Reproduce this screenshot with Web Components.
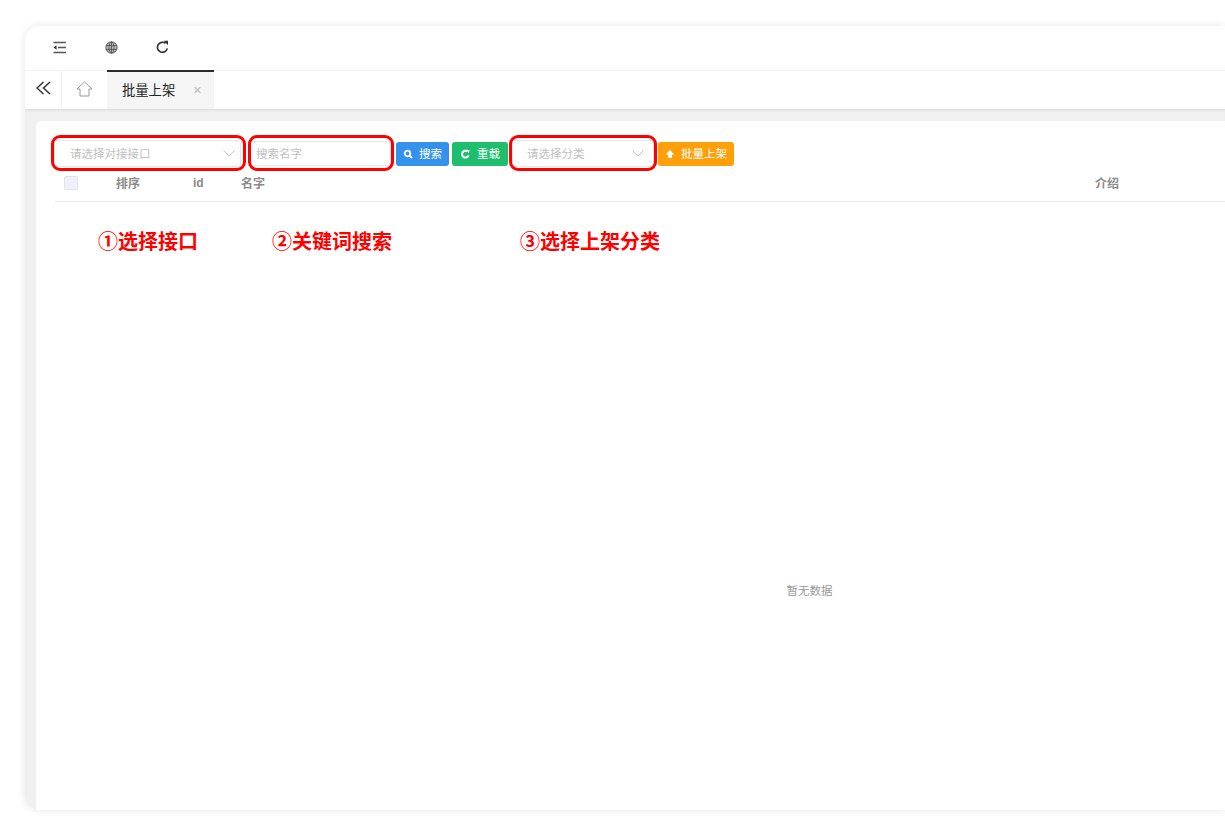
<!DOCTYPE html>
<html lang="zh">
<head>
<meta charset="utf-8">
<title>批量上架</title>
<style>
  html, body { margin: 0; height: 100%; background: #fff; overflow: hidden; }
  body { font-family: "Noto Sans CJK SC", "Liberation Sans", sans-serif; }
</style>
</head>
<body>
<admin-shell>
  <top-bar slot="top"></top-bar>
  <tab-strip slot="tabs"></tab-strip>
  <bulk-panel></bulk-panel>
</admin-shell>

<!-- annotations drawn over the screenshot -->
<red-ring x="51" y="135" w="195" h="36"></red-ring>
<red-ring x="248" y="135" w="146" h="36"></red-ring>
<red-ring x="509" y="135" w="148" h="36"></red-ring>
<red-note x="98" y="229">①选择接口</red-note>
<red-note x="272" y="229">②关键词搜索</red-note>
<red-note x="520" y="229">③选择上架分类</red-note>

<script>
class AdminShell extends HTMLElement {
  constructor() {
    super();
    this.attachShadow({ mode: 'open' });
    this.shadowRoot.innerHTML = `
      <style>
        :host {
          display: flex;
          flex-direction: column;
          width: 1200px;
          height: 784px;
          margin: 26px 0 0 25px;
          background: #fff;
          border-radius: 14px 0 0 14px;
          box-shadow: 0 0 8px rgba(0, 0, 0, .1);
          overflow: hidden;
        }
        main {
          flex: 1;
          min-height: 0;
          display: flex;
          background: #f0f0f0;
          padding: 12px 0 0 11px;
          box-shadow: inset 0 3px 3px -2px rgba(0, 0, 0, .1);
        }
      </style>
      <slot name="top"></slot>
      <slot name="tabs"></slot>
      <main><slot></slot></main>
    `;
  }
}

class TopBar extends HTMLElement {
  constructor() {
    super();
    this.attachShadow({ mode: 'open' });
    this.shadowRoot.innerHTML = `
      <style>
        :host {
          display: flex;
          align-items: center;
          height: 42px;
          padding: 0 0 2px 27px;
          border-bottom: 1px solid #f2f2f2;
          gap: 37px;
        }
        svg { display: block; width: 15px; height: 15px; fill: none; stroke: #333; }
      </style>
      <svg viewBox="0 0 15 15" stroke-width="1.300">
        <path d="M1.500 2.500h12.500M6 7.500h8M1.500 12.500h12.500" stroke="#555"/>
        <path d="M4.500 5.300L1.500 7.500 4.500 9.700z" fill="#333" stroke="none"/>
      </svg>
      <svg viewBox="0 0 15 15" stroke-width=".9">
        <circle cx="7.500" cy="7.500" r="5.600" fill="#bbb" stroke="#444"/>
        <ellipse cx="7.500" cy="7.500" rx="2.500" ry="5.600" stroke="#555"/>
        <path d="M2 5.600h11M2 9.400h11M7.500 2v11" stroke="#555"/>
      </svg>
      <svg viewBox="0 0 15 15" stroke-width="1.600" style="margin-left:-1px">
        <path d="M12.300 8.400A5 5 0 1 1 10.600 3.400"/>
        <path d="M8.800 .8h4.200v4.400z" fill="#333" stroke="none"/>
      </svg>
    `;
  }
}

class TabStrip extends HTMLElement {
  constructor() {
    super();
    this.attachShadow({ mode: 'open' });
    this.shadowRoot.innerHTML = `
      <style>
        :host {
          display: flex;
          height: 38px;
          position: relative;
          z-index: 1;
          font-size: 13.300px;
          color: #222;
        }
        .cell {
          display: flex;
          align-items: center;
          justify-content: center;
          box-sizing: border-box;
          border-right: 1px solid #f4f4f4;
        }
        .fold { width: 37px; padding-bottom: 3px; }
        .home { width: 45px; border-right: 0; padding-bottom: 2px; }
        .tab {
          box-sizing: border-box;
          width: 107px;
          background: #f5f5f5;
          border-top: 2px solid #2b2b2b;
          margin-top: -1px;
          height: 39px;
          display: flex;
          align-items: center;
          padding: 0 0 2px 15px;
        }
        .tab b { flex: none; font-weight: 400; width: 54px; line-height: 1; white-space: nowrap; }
        .tab span { margin-left: 17px; color: #bbb; font: 15px "Liberation Sans", sans-serif; }
        svg { display: block; fill: none; }
      </style>
      <div class="cell fold">
        <svg width="15" height="15" viewBox="0 0 15 15" stroke="#333" stroke-width="1.500">
          <path d="M7.500 1L1 7l6.500 6M14 1L7.500 7l6.500 6"/>
        </svg>
      </div>
      <div class="cell home">
        <svg width="17" height="16" viewBox="0 0 17 16" stroke="#999" stroke-width="1">
          <path d="M1 8L8.500 1 16 8h-3v7H4V8z"/>
        </svg>
      </div>
      <div class="tab"><b>批量上架</b><span>×</span></div>
    `;
  }
}

class PickBox extends HTMLElement {
  constructor() {
    super();
    this.attachShadow({ mode: 'open' });
    this.shadowRoot.innerHTML = `
      <style>
        :host {
          display: flex;
          align-items: center;
          box-sizing: border-box;
          width: ${this.getAttribute('width')}px;
          height: 27px;
          padding: 0 ${this.getAttribute('pr')}px 0 ${this.getAttribute('pl')}px;
          background: #fff;
          border: 1px solid #e6e6e6;
          border-radius: 3px;
          color: #c0c0c0;
          font-size: 11.500px;
        }
        span { flex: 1; padding-bottom: 2px; }
        svg { display: block; }
      </style>
      <span>${this.getAttribute('label')}</span>
      <svg width="12" height="7" viewBox="0 0 12 7" fill="none" stroke="#c4c4c4" stroke-width="1"><path d="M.5.5L6 6 11.500 .5"/></svg>
    `;
  }
}

class SearchField extends HTMLElement {
  constructor() {
    super();
    this.attachShadow({ mode: 'open' });
    this.shadowRoot.innerHTML = `
      <style>
        :host {
          display: flex;
          align-items: center;
          box-sizing: border-box;
          width: 141px;
          height: 25px;
          padding: 0 0 1px 5px;
          border: 1px solid #e6e6e6;
          border-radius: 3px;
          color: #c0c0c0;
          font-size: 11.500px;
        }
      </style>
      <span>搜索名字</span>
    `;
  }
}

const glyphs = {
  search: '<circle cx="4.500" cy="4.500" r="2.800" fill="none" stroke="#fff" stroke-width="1.800"/><path d="M6.500 6.500L9 9" stroke="#fff" stroke-width="2"/>',
  reload: '<path d="M8.600 6.300A3.400 3.400 0 1 1 7.400 2.400" fill="none" stroke="#fff" stroke-width="2"/><path d="M6.300 .6L9.600 1.200 8.600 4.500z" fill="#fff"/>',
  up: '<path d="M5 1L9.300 5.400H6.900V9H3.100V5.400H.7z" fill="#fff"/>'
};

class ActionBtn extends HTMLElement {
  constructor() {
    super();
    this.attachShadow({ mode: 'open' });
    this.shadowRoot.innerHTML = `
      <style>
        :host {
          display: flex;
          align-items: center;
          box-sizing: border-box;
          height: 24px;
          width: ${this.getAttribute('width')}px;
          padding-left: ${this.getAttribute('pl') || 7}px;
          gap: ${this.getAttribute('gap') || 6}px;
          border-radius: 3px;
          background: ${this.getAttribute('color')};
          color: #fff;
          font-size: 11.500px;
        }
        svg { display: block; flex: none; }
        span { padding-bottom: 1px; }
      </style>
      <svg width="10" height="10" viewBox="0 0 10 10">${glyphs[this.getAttribute('icon')]}</svg>
      <span><slot></slot></span>
    `;
  }
}

class DataGrid extends HTMLElement {
  constructor() {
    super();
    this.attachShadow({ mode: 'open' });
    this.shadowRoot.innerHTML = `
      <style>
        :host { display: flex; flex-direction: column; flex: 1; min-height: 0; }
        .head {
          display: grid;
          grid-template-columns: 52px 77px 48px 854px 1fr;
          align-items: center;
          height: 32px;
          margin-left: 1px;
          padding: 0 0 2px 9px;
          border-bottom: 1px solid #ebedf2;
          color: #8a8a8a;
          font-size: 12px;
          font-weight: 700;
        }
        .head .cn { margin-bottom: 2px; }
        .check {
          box-sizing: border-box;
          width: 14px;
          height: 14px;
          background: #eef1fa;
          border: 1px solid #e1e4ee;
          border-radius: 2px;
        }
        .id { font-family: "Liberation Sans", sans-serif; }
        .empty {
          flex: 1;
          display: flex;
          align-items: center;
          justify-content: center;
          padding: 167px 0 0 340px;
          color: #999;
          font-size: 11.500px;
        }
      </style>
      <div class="head">
        <div class="check"></div>
        <div class="cn">排序</div>
        <div class="id">id</div>
        <div class="cn">名字</div>
        <div class="cn">介绍</div>
      </div>
      <div class="empty">暂无数据</div>
    `;
  }
}

class RedRing extends HTMLElement {
  constructor() {
    super();
    this.attachShadow({ mode: 'open' });
    const a = n => this.getAttribute(n);
    this.shadowRoot.innerHTML = `
      <style>
        :host {
          position: absolute;
          left: ${a('x')}px;
          top: ${a('y')}px;
          width: ${a('w')}px;
          height: ${a('h')}px;
          box-sizing: border-box;
          border: 3px solid #f00;
          border-radius: 9px;
          pointer-events: none;
        }
      </style>
    `;
  }
}

class RedNote extends HTMLElement {
  constructor() {
    super();
    this.attachShadow({ mode: 'open' });
    this.shadowRoot.innerHTML = `
      <style>
        :host {
          position: absolute;
          left: ${this.getAttribute('x')}px;
          top: ${this.getAttribute('y')}px;
          color: #f00;
          font-size: 20px;
          line-height: 24px;
          font-weight: 700;
          white-space: nowrap;
        }
      </style>
      <slot></slot>
    `;
  }
}

class BulkPanel extends HTMLElement {
  constructor() {
    super();
    this.attachShadow({ mode: 'open' });
    this.shadowRoot.innerHTML = `
      <style>
        :host {
          flex: 1;
          display: flex;
          flex-direction: column;
          background: #fff;
          border-radius: 6px 0 0 0;
          padding: 19px 0 0 18px;
          min-width: 0;
        }
        .tools { display: flex; align-items: center; height: 27px; }
      </style>
      <div class="tools">
        <pick-box width="187" pl="15" pr="5" label="请选择对接接口"></pick-box>
        <search-field style="margin-left:9px"></search-field>
        <action-btn style="margin-left:5px" width="53" color="#3492ed" icon="search">搜索</action-btn>
        <action-btn style="margin-left:3px" width="56" pl="8" gap="7" color="#1fbe6e" icon="reload">重载</action-btn>
        <pick-box style="margin-left:4px" width="142" pl="14" pr="9" label="请选择分类"></pick-box>
        <action-btn style="margin-left:4px" width="76" color="#ff9f0a" icon="up">批量上架</action-btn>
      </div>
      <data-grid></data-grid>
    `;
  }
}

customElements.define('admin-shell', AdminShell);
customElements.define('top-bar', TopBar);
customElements.define('tab-strip', TabStrip);
customElements.define('pick-box', PickBox);
customElements.define('search-field', SearchField);
customElements.define('action-btn', ActionBtn);
customElements.define('data-grid', DataGrid);
customElements.define('bulk-panel', BulkPanel);
customElements.define('red-ring', RedRing);
customElements.define('red-note', RedNote);
</script>
</body>
</html>
